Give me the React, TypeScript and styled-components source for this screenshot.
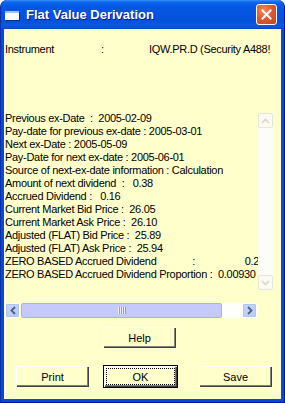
import styled, { createGlobalStyle } from 'styled-components';

const GlobalStyle = createGlobalStyle`
  html, body {
    margin: 0;
    padding: 0;
    background: #ffffff;
  }
  body {
    font-family: 'Liberation Sans', Arial, sans-serif;
  }
`;

const details = [
  'Previous ex-Date  :  2005-02-09',
  'Pay-date for previous ex-date : 2005-03-01',
  'Next ex-Date : 2005-05-09',
  'Pay-Date for next ex-date : 2005-06-01',
  'Source of next-ex-date information : Calculation',
  'Amount of next dividend  :   0.38',
  'Accrued Dividend :   0.16',
  'Current Market Bid Price :  26.05',
  'Current Market Ask Price :  26.10',
  'Adjusted (FLAT) Bid Price :  25.89',
  'Adjusted (FLAT) Ask Price :  25.94',
  'ZERO BASED Accrued Dividend             :                  0.25',
  'ZERO BASED Accrued Dividend Proportion :  0.00930',
];

const App = () => {
  return (
    <>
      <GlobalStyle />
      <Window>
        <TitleBar>
          <TitleIcon />
          <TitleText>Flat Value Derivation</TitleText>
          <CloseButton>
            <svg width="11" height="11" viewBox="0 0 11 11">
              <path d="M1.5 1.5 L9.5 9.5 M9.5 1.5 L1.5 9.5" stroke="#fff" strokeWidth="2" strokeLinecap="square" />
            </svg>
          </CloseButton>
        </TitleBar>
        <Client>
          <InstrumentRow>
            <span>Instrument</span>
            <span>:</span>
            <span>IQW.PR.D (Security A488!</span>
          </InstrumentRow>

          <DetailsArea>
            <DetailsText>
              {details.map((d) => (
                <Line key={d}>{d}</Line>
              ))}
            </DetailsText>
            <VScroll>
              <DisabledArrow>
                <svg width="9" height="6" viewBox="0 0 9 6">
                  <path d="M1 5 L4.5 1.5 L8 5" stroke="#d8d8c8" strokeWidth="1.6" fill="none" />
                </svg>
              </DisabledArrow>
              <VTrack />
              <DisabledArrow>
                <svg width="9" height="6" viewBox="0 0 9 6">
                  <path d="M1 1 L4.5 4.5 L8 1" stroke="#d8d8c8" strokeWidth="1.6" fill="none" />
                </svg>
              </DisabledArrow>
            </VScroll>
          </DetailsArea>

          <HScroll>
            <ArrowButton>
              <svg width="6" height="9" viewBox="0 0 6 9">
                <path d="M5 1 L1.5 4.5 L5 8" stroke="#4d6185" strokeWidth="1.8" fill="none" />
              </svg>
            </ArrowButton>
            <Thumb>
              <Grip>
                <i />
                <i />
                <i />
                <i />
              </Grip>
            </Thumb>
            <HTrack />
            <ArrowButton>
              <svg width="6" height="9" viewBox="0 0 6 9">
                <path d="M1 1 L4.5 4.5 L1 8" stroke="#4d6185" strokeWidth="1.8" fill="none" />
              </svg>
            </ArrowButton>
          </HScroll>

          <HelpRow>
            <Button>Help</Button>
          </HelpRow>

          <ButtonRow>
            <Button>Print</Button>
            <Button $default>
              <Focus>OK</Focus>
            </Button>
            <Button>Save</Button>
          </ButtonRow>
        </Client>
      </Window>
    </>
  );
};

const Window = styled.div`
  width: 285px;
  height: 403px;
  box-sizing: border-box;
  display: flex;
  flex-direction: column;
  background: #0a49d8;
  border-radius: 7px 7px 0 0;
  border-left: 1px solid #0831a8;
  border-right: 1px solid #00138c;
  border-bottom: 1px solid #00138c;
  overflow: hidden;
`;

const TitleBar = styled.div`
  height: 29px;
  flex: none;
  display: flex;
  align-items: center;
  padding: 0 7px 0 4px;
  box-sizing: border-box;
  background: linear-gradient(
    to bottom,
    #3d8df5 0px,
    #0a6af0 2px,
    #0559e4 5px,
    #0553de 14px,
    #0551dc 22px,
    #0a5ae6 25px,
    #0a4fd0 28px,
    #0842b8 29px
  );
`;

const TitleIcon = styled.div`
  width: 14px;
  height: 9px;
  margin-top: 1px;
  background: #ffffff;
  border-top: 2px solid #9cc4ff;
  box-sizing: border-box;
  box-shadow: 1px 1px 0 #0a2c90;
`;

const TitleText = styled.div`
  flex: 1;
  margin-left: 7px;
  color: #ffffff;
  font-family: 'Liberation Sans', Arial, sans-serif;
  font-weight: bold;
  font-size: 13px;
  text-shadow: 1px 1px 0 #0a1a8c;
  white-space: nowrap;
`;

const CloseButton = styled.div`
  width: 21px;
  height: 21px;
  box-sizing: border-box;
  display: flex;
  align-items: center;
  justify-content: center;
  border: 1px solid #ffffff;
  border-radius: 3px;
  background: radial-gradient(circle at 35% 30%, #f08a66 0%, #e25a32 45%, #c8401c 100%);
`;

const Client = styled.div`
  flex: 1;
  margin: 0 3px 3px 3px;
  background: #ffffcc;
  display: flex;
  flex-direction: column;
  font-size: 11px;
  letter-spacing: -0.3px;
  color: #000000;
  border-left: 1px solid #ffffcc;
`;

const InstrumentRow = styled.div`
  margin-top: 14px;
  display: grid;
  grid-template-columns: 96px 48px 1fr;
  line-height: 13px;
  white-space: nowrap;
  overflow: hidden;
`;

const DetailsArea = styled.div`
  margin-top: 56px;
  display: grid;
  grid-template-columns: 253px 15px;
  height: 178px;
`;

const DetailsText = styled.div`
  overflow: hidden;
`;

const Line = styled.div`
  line-height: 13px;
  white-space: pre;
`;

const VScroll = styled.div`
  margin-top: 1px;
  display: flex;
  flex-direction: column;
  background: #fdfdf8;
`;

const VTrack = styled.div`
  flex: 1;
`;

const DisabledArrow = styled.div`
  height: 15px;
  box-sizing: border-box;
  display: flex;
  align-items: center;
  justify-content: center;
  border: 1px solid #e6e6d8;
  border-radius: 2px;
  background: #fbfbf4;
`;

const HScroll = styled.div`
  margin-top: 13px;
  width: 252px;
  height: 15px;
  display: flex;
`;

const ArrowButton = styled.div`
  width: 15px;
  flex: none;
  box-sizing: border-box;
  display: flex;
  align-items: center;
  justify-content: center;
  border: 1px solid #ffffff;
  border-radius: 2px;
  background: linear-gradient(135deg, #c8d6fb 0%, #b7c9f6 100%);
  box-shadow: inset 0 0 0 1px #b1c3ef;
`;

const Thumb = styled.div`
  width: 201px;
  margin-left: 1px;
  flex: none;
  box-sizing: border-box;
  border: 1px solid #a8b4e8;
  border-radius: 2px;
  background: #c6c9fb;
  display: flex;
  align-items: center;
  justify-content: center;
`;

const Grip = styled.div`
  display: flex;
  gap: 1px;
  height: 7px;

  i {
    width: 1px;
    background: #eef0ff;
    box-shadow: 1px 0 0 #8c97d8;
  }
`;

const HTrack = styled.div`
  flex: 1;
  background: #fefefb;
`;

const HelpRow = styled.div`
  margin-top: 8px;
  padding-left: 97px;
`;

const ButtonRow = styled.div`
  margin-top: 16px;
  display: grid;
  grid-template-columns: 75px 75px 75px;
  column-gap: 13px;
  padding-left: 10px;

  & > :nth-child(3) {
    margin-left: 7px;
  }
`;

const Button = styled.div<{ $default?: boolean }>`
  width: 75px;
  height: 23px;
  box-sizing: border-box;
  display: flex;
  align-items: center;
  justify-content: center;
  font-size: 11px;
  letter-spacing: 0;
  color: #000000;
  background: #ffffcc;
  border: 1px solid ${(p) => (p.$default ? '#000000' : '#ffffcc')};
  box-shadow: inset 1px 1px 0 #ffffff, inset -1px -1px 0 #404040, inset -2px -2px 0 #808080;
  padding: 2px;
`;

const Focus = styled.div`
  width: 100%;
  height: 100%;
  box-sizing: border-box;
  border: 1px dotted #000000;
  display: flex;
  align-items: center;
  justify-content: center;
`;

export default App;
